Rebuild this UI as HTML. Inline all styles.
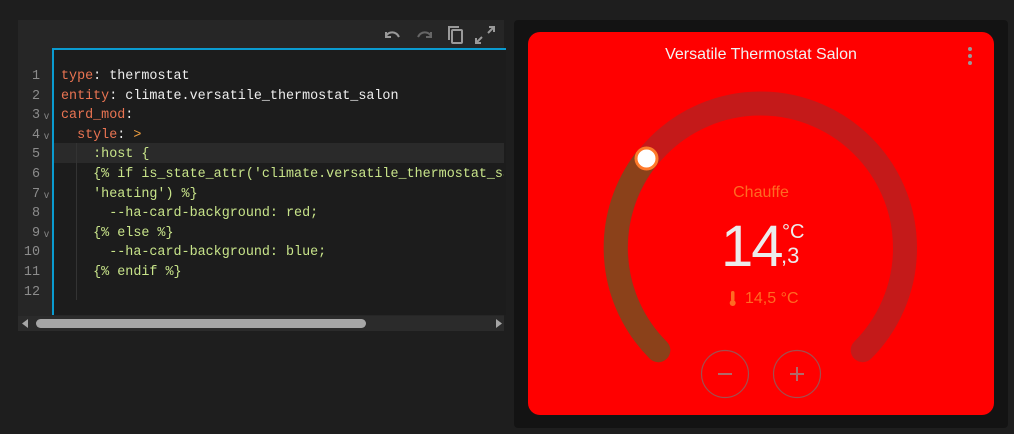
<!DOCTYPE html>
<html><head><meta charset="utf-8"><style>
body{margin:0;width:1014px;height:434px;background:#1e1e1e;position:relative;overflow:hidden;font-family:"Liberation Sans",sans-serif}
.ed{position:absolute;left:18px;top:20px;width:486px;height:311px;background:#262626}
.code{position:absolute;left:52px;top:48px;width:452px;height:265px;background:#1c1c1c;border-left:2px solid #0a9bd0;border-top:2px solid #0a9bd0}
.hl{position:absolute;left:54px;top:143px;width:450px;height:20px;background:#2a2a2a}
.guide{position:absolute;left:76px;top:143px;width:1px;height:157px;background:#333}
.ln{position:absolute;left:18px;width:22px;text-align:right;color:#8c8c8c;font:13.4px "Liberation Mono",monospace}
.fd{position:absolute;left:44px;color:#888;font:10px "Liberation Sans",sans-serif}
.l{position:absolute;left:61px;white-space:pre;font:13.4px "Liberation Mono",monospace;color:#eee}
.k{color:#ea7452}.g{color:#c8e48a}.o{color:#f0a040}
.sb{position:absolute;left:18px;top:316px;width:486px;height:15px;background:#2b2b2b}
.th{position:absolute;left:36px;top:319px;width:330px;height:9px;border-radius:5px;background:#a6a6a6}
.pn{position:absolute;left:514px;top:20px;width:494px;height:408px;background:#131313;border-radius:4px}
.card{position:absolute;left:528px;top:32px;width:466px;height:383px;background:#ff0000;border-radius:12px;overflow:hidden}
</style></head><body>
<div class="ed"></div>
<svg style="position:absolute;left:380px;top:24px" width="124" height="22" viewBox="0 0 124 22" fill="none" stroke="#9a9a9a" stroke-width="2">
<path d="M6 8 L6 13 L11 13 M6 12 C9 7 16 7 19 13"/>
<path d="M51 8 L51 13 L46 13 M51 12 C48 7 41 7 38 13" stroke="#666"/>
<rect x="72" y="6" width="10" height="13" rx="1"/><path d="M69 16 V3 H79"/>
<path d="M109 3 H114 V8 M114 3 L108 9 M101 19 H96 V14 M96 19 L102 13"/>
</svg>
<div class="code"></div>
<div class="hl"></div><div class="guide"></div>
<div style="position:absolute;left:0;top:3px;width:1014px;height:300px">
<div class="ln" style="top:66px">1</div><div class="ln" style="top:86px">2</div><div class="ln" style="top:105px">3</div><div class="ln" style="top:125px">4</div><div class="ln" style="top:144px">5</div><div class="ln" style="top:164px">6</div><div class="ln" style="top:184px">7</div><div class="ln" style="top:203px">8</div><div class="ln" style="top:223px">9</div><div class="ln" style="top:242px">10</div><div class="ln" style="top:262px">11</div><div class="ln" style="top:282px">12</div>
<div class="fd" style="top:108px">v</div><div class="fd" style="top:128px">v</div><div class="fd" style="top:187px">v</div><div class="fd" style="top:226px">v</div>
<div class="l" style="top:66px"><span class="k">type</span>: thermostat</div>
<div class="l" style="top:86px"><span class="k">entity</span>: climate.versatile_thermostat_salon</div>
<div class="l" style="top:105px"><span class="k">card_mod</span>:</div>
<div class="l" style="top:125px">  <span class="k">style</span>: <span class="o">&gt;</span></div>
<div class="l g" style="top:144px">    :host {</div>
<div class="l g" style="top:164px;width:443px;overflow:hidden">    {% if is_state_attr('climate.versatile_thermostat_salon',</div>
<div class="l g" style="top:184px">    'heating') %}</div>
<div class="l g" style="top:203px">      --ha-card-background: red;</div>
<div class="l g" style="top:223px">    {% else %}</div>
<div class="l g" style="top:242px">      --ha-card-background: blue;</div>
<div class="l g" style="top:262px">    {% endif %}</div>
</div>
<div class="sb"></div><div class="th"></div>
<svg style="position:absolute;left:18px;top:316px" width="486" height="15"><path d="M4 7.5 L10 3 V12Z M478 3 L484 7.5 L478 12Z" fill="#a6a6a6"/></svg>
<div class="pn"></div>
<div class="card">
<div style="position:absolute;left:0;width:466px;top:14px;text-align:center;color:#f2f2f2;font-size:16px">Versatile Thermostat Salon</div>
<svg style="position:absolute;left:438px;top:14px" width="8" height="20"><circle cx="4" cy="3" r="2" fill="#999"/><circle cx="4" cy="10" r="2" fill="#999"/><circle cx="4" cy="17" r="2" fill="#999"/></svg>
<svg style="position:absolute;left:0;top:0" width="466" height="383">
<g transform="translate(-528,-32)">
<path d="M658.3 350.2 A144.5 144.5 0 1 1 862.7 350.2" stroke="#c41a1a" stroke-width="24" fill="none" stroke-linecap="round"/>
<path d="M658.3 350.2 A144.5 144.5 0 0 1 646.5 158.5" stroke="#8b411a" stroke-width="24" fill="none" stroke-linecap="round"/>
<circle cx="646.5" cy="158.5" r="10.5" fill="#fff" stroke="#ff7a2a" stroke-width="3"/>
<circle cx="725" cy="374" r="23.5" fill="none" stroke="#a05050" stroke-width="1.2"/>
<circle cx="797" cy="374" r="23.5" fill="none" stroke="#a05050" stroke-width="1.2"/>
<path d="M718 374 H732 M797 367 V381 M790 374 H804" stroke="#b06a6a" stroke-width="2"/>
<rect x="731" y="291" width="3.5" height="10" rx="1.7" fill="#ff6a22"/><circle cx="732.7" cy="303" r="3" fill="#ff6a22"/>
</g></svg>
<div style="position:absolute;left:0;width:466px;top:152px;text-align:center;color:#ff6a22;font-size:16px">Chauffe</div>
<div style="position:absolute;left:193px;top:180px;color:#ececec;font-size:58px;line-height:70px;letter-spacing:-2px">14</div>
<div style="position:absolute;left:254px;top:189px;color:#ececec;font-size:20px">°C</div>
<div style="position:absolute;left:253px;top:211px;color:#ececec;font-size:22px">,3</div>
<div style="position:absolute;left:217px;top:258px;color:#ff6a22;font-size:16px">14,5 °C</div>
</div>
</body></html>
